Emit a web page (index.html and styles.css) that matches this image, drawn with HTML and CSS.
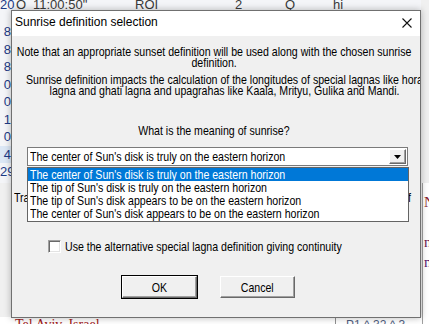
FILE: index.html
```html
<!DOCTYPE html>
<html>
<head>
<meta charset="utf-8">
<title>Sunrise definition selection</title>
<link rel="stylesheet" href="styles.css">
</head>
<body>
<div class="app">
  <div class="app-top">
    <div class="table">
      <div class="hrow">
        <span class="c1">20</span><span class="c2">O</span><span class="c3">11:00:50"</span><span class="c4">ROI</span><span class="c5">2</span><span class="c6">Q</span><span class="c7">hi</span>
      </div>
      <div class="rows">
        <div class="row"><span class="num">8</span></div>
        <div class="row"><span class="num">8</span></div>
        <div class="row"><span class="num">8</span></div>
        <div class="row"><span class="num">0</span></div>
        <div class="row"><span class="num">0</span></div>
        <div class="row"><span class="num">1</span></div>
        <div class="row"><span class="num">0</span></div>
        <div class="row row-sel"><span class="num">4</span></div>
        <div class="row"><span class="num">29</span></div>
      </div>
    </div>
    <div class="side-top"></div>
  </div>
  <div class="app-bottom">
    <div class="chart">
      <div class="chart-area"></div>
      <div class="status">
        <span class="place">Tel Aviv, Israel</span>
        <span class="status-right">P1 ^ 32 ^ 3</span>
      </div>
    </div>
    <div class="side-panel">
      <div class="sp1">Nak</div>
      <div class="sp2">nt</div>
      <div class="sp3">m</div>
    </div>
  </div>
</div>

<div class="dialog">
  <div class="titlebar">
    <span class="title">Sunrise definition selection</span>
    <svg class="close" width="10" height="10" viewBox="0 0 10 10"><path d="M0.5 0.5L9.5 9.5M9.5 0.5L0.5 9.5" stroke="#111" stroke-width="1.1" fill="none"/></svg>
  </div>
  <div class="content">
    <div class="note"><span class="nc">Note that an appropriate sunset definition will be used along with the chosen sunrise<br>definition.</span></div>
    <div class="impact"><span class="nc">Sunrise definition impacts the calculation of the longitudes of special lagnas like hora<br>lagna and ghati lagna and upagrahas like Kaala, Mrityu, Gulika and Mandi.</span></div>
    <div class="question"><span class="nc">What is the meaning of sunrise?</span></div>
    <div class="combo-wrap">
      <div class="combo">
        <span class="combo-text n">The center of Sun's disk is truly on the eastern horizon</span>
        <span class="combo-btn"><svg width="7" height="4" viewBox="0 0 7 4"><path d="M0 0H7L3.5 4Z" fill="#000"/></svg></span>
      </div>
      <ul class="list">
        <li class="sel"><span class="n">The center of Sun's disk is truly on the eastern horizon</span></li>
        <li><span class="n">The tip of Sun's disk is truly on the eastern horizon</span></li>
        <li><span class="n">The tip of Sun's disk appears to be on the eastern horizon</span></li>
        <li><span class="n">The center of Sun's disk appears to be on the eastern horizon</span></li>
      </ul>
    </div>
    <div class="hidden-line"><span class="n">Tra</span><span class="nr">of</span></div>
    <label class="check-row"><span class="checkbox"></span><span class="n">Use the alternative special lagna definition giving continuity</span></label>
    <div class="buttons">
      <button class="btn btn-default"><span class="nc">OK</span></button>
      <button class="btn"><span class="nc">Cancel</span></button>
    </div>
  </div>
</div>
</body>
</html>
```
FILE: styles.css
```css
html, body {
  margin: 0;
  padding: 0;
}
body {
  width: 429px;
  height: 324px;
  overflow: hidden;
  position: relative;
  font-family: "Liberation Sans", Arial, sans-serif;
}

/* background application */
.app {
  width: 429px;
  height: 324px;
  display: flex;
  flex-direction: column;
  background: #f0f0f0;
}
.app-top {
  height: 183px;
  display: flex;
}
.table {
  width: 421px;
  background: #f4f5f8;
}
.hrow {
  display: grid;
  grid-template-columns: 11px 22px 102px 100px 50px 48px 1fr;
  height: 23px;
  font-size: 13px;
  line-height: 12px;
  color: #3a3a3a;
}
.hrow span {
  margin-top: -1px;
  white-space: nowrap;
}
.hrow .c1 {
  text-align: right;
  color: #1d3a86;
}
.hrow .c2 { padding-left: 5px; }
.rows {
  display: flex;
  flex-direction: column;
}
.row {
  height: 17.5px;
  line-height: 17.5px;
  font-size: 13px;
}
.row-sel {
  background: #dce7f5;
}
.num {
  display: block;
  width: 11px;
  text-align: right;
  color: #1d3a86;
  white-space: nowrap;
}
.side-top {
  flex: 1;
  background: #f0f0f0;
}
.app-bottom {
  flex: 1;
  display: flex;
}
.chart {
  width: 422px;
  display: flex;
  flex-direction: column;
}
.chart-area {
  flex: 1;
  background: #f0f0f0;
}
.status {
  height: 7px;
  background: #fff;
  display: flex;
  font-family: "Liberation Serif", serif;
  font-size: 14px;
  line-height: 16px;
  overflow: hidden;
}
.place {
  width: 320px;
  padding-left: 15px;
  color: #a01818;
}
.status-right {
  border-left: 1px solid #909090;
  padding-left: 10px;
  color: #506080;
  font-family: "Liberation Sans", sans-serif;
  font-size: 12px;
}
.side-panel {
  flex: 1;
  border-left: 1px solid #a0a0a0;
  background: #fff;
  font-family: "Liberation Serif", serif;
  font-size: 15px;
  padding-left: 1px;
  overflow: hidden;
  white-space: nowrap;
}
.sp1 { color: #8a1a2a; margin-top: 11px; line-height: 16px; }
.sp2 { color: #6a1850; margin-top: 24px; line-height: 16px; }
.sp3 { color: #5a1a70; margin-top: 4px; line-height: 16px; }

/* dialog window */
.dialog {
  position: absolute;
  left: 11px;
  top: 10px;
  width: 410px;
  height: 308px;
  box-sizing: border-box;
  border: 1px solid #707070;
  background: #f0f0f0;
  box-shadow: 0 0 7px rgba(0, 0, 0, 0.28);
  display: flex;
  flex-direction: column;
  overflow: hidden;
}
.titlebar {
  height: 25px;
  flex-shrink: 0;
  background: #fff;
  display: flex;
  align-items: flex-start;
  justify-content: space-between;
  padding: 4px 8px 0 3px;
  box-sizing: border-box;
}
.title {
  font-family: "Liberation Sans", Arial, sans-serif;
  font-size: 12px;
  line-height: 14px;
  color: #000;
}
.close {
  margin-top: 3px;
}
.content {
  flex: 1;
  display: flex;
  flex-direction: column;
  font-family: "Liberation Sans", Arial, sans-serif;
  font-size: 13px;
  line-height: 11px;
  color: #000;
}

/* narrow (condensed) text rendering */
.n, .nc, .nr {
  display: inline-block;
  white-space: nowrap;
  transform: scaleX(0.815);
  transform-origin: left center;
}
.nc {
  text-align: center;
  transform-origin: center center;
}
.nr {
  transform-origin: right center;
}

.note {
  margin-top: 10px;
  padding-right: 4px;
  display: flex;
  justify-content: center;
}
.impact {
  margin-top: 6px;
  margin-left: 15px;
  width: 396px;
  flex-shrink: 0;
  align-self: flex-start;
  display: flex;
  justify-content: center;
}
.question {
  margin-top: 29px;
  padding-right: 4px;
  display: flex;
  justify-content: center;
}
.combo-wrap {
  position: relative;
  margin-top: 11px;
  margin-left: 15px;
  width: 381px;
  height: 19px;
  flex-shrink: 0;
}
.combo {
  height: 19px;
  box-sizing: border-box;
  border: 1px solid #7a7a7a;
  background: #fff;
  display: flex;
  align-items: center;
  justify-content: space-between;
  padding: 0 1px 0 2px;
}
.combo-text {
  line-height: 13px;
}
.combo-btn {
  width: 17px;
  height: 15px;
  box-sizing: border-box;
  background: #f0f0f0;
  border-top: 1px solid #fff;
  border-left: 1px solid #fff;
  border-right: 1px solid #696969;
  border-bottom: 1px solid #696969;
  box-shadow: inset -1px -1px 0 #a0a0a0;
  display: flex;
  align-items: center;
  justify-content: center;
}
.list {
  position: absolute;
  left: 0;
  top: 20px;
  width: 382px;
  margin: 0;
  padding: 0;
  list-style: none;
  background: #fff;
  border: 1px solid #646464;
  box-sizing: border-box;
  height: 55px;
  z-index: 2;
}
.list li {
  height: 13px;
  line-height: 13px;
  padding-left: 2px;
  white-space: nowrap;
}
.list li.sel {
  background: #0078d7;
  color: #fff;
}
.hidden-line {
  margin-top: 26px;
  margin-left: 2px;
  margin-right: 9px;
  display: flex;
  justify-content: space-between;
}
.check-row {
  margin-top: 37px;
  margin-left: 36px;
  display: flex;
  align-items: center;
  height: 13px;
}
.checkbox {
  width: 13px;
  height: 13px;
  flex-shrink: 0;
  box-sizing: border-box;
  background: #fff;
  border-top: 1px solid #a0a0a0;
  border-left: 1px solid #a0a0a0;
  border-right: 1px solid #fff;
  border-bottom: 1px solid #fff;
  box-shadow: inset 1px 1px 0 #696969, inset -1px -1px 0 #e3e3e3;
  margin-right: 4px;
}
.buttons {
  margin-top: 23px;
  margin-left: 110px;
  display: flex;
  gap: 23px;
}
.btn {
  width: 75px;
  height: 22px;
  box-sizing: border-box;
  padding: 0;
  margin: 0;
  font-family: inherit;
  font-size: 13px;
  line-height: 13px;
  color: #000;
  background: #f0f0f0;
  border-top: 1px solid #fff;
  border-left: 1px solid #fff;
  border-right: 1px solid #696969;
  border-bottom: 1px solid #696969;
  box-shadow: inset -1px -1px 0 #a0a0a0;
}
.btn-default {
  outline: 1px solid #000;
  outline-offset: 0;
}
```
